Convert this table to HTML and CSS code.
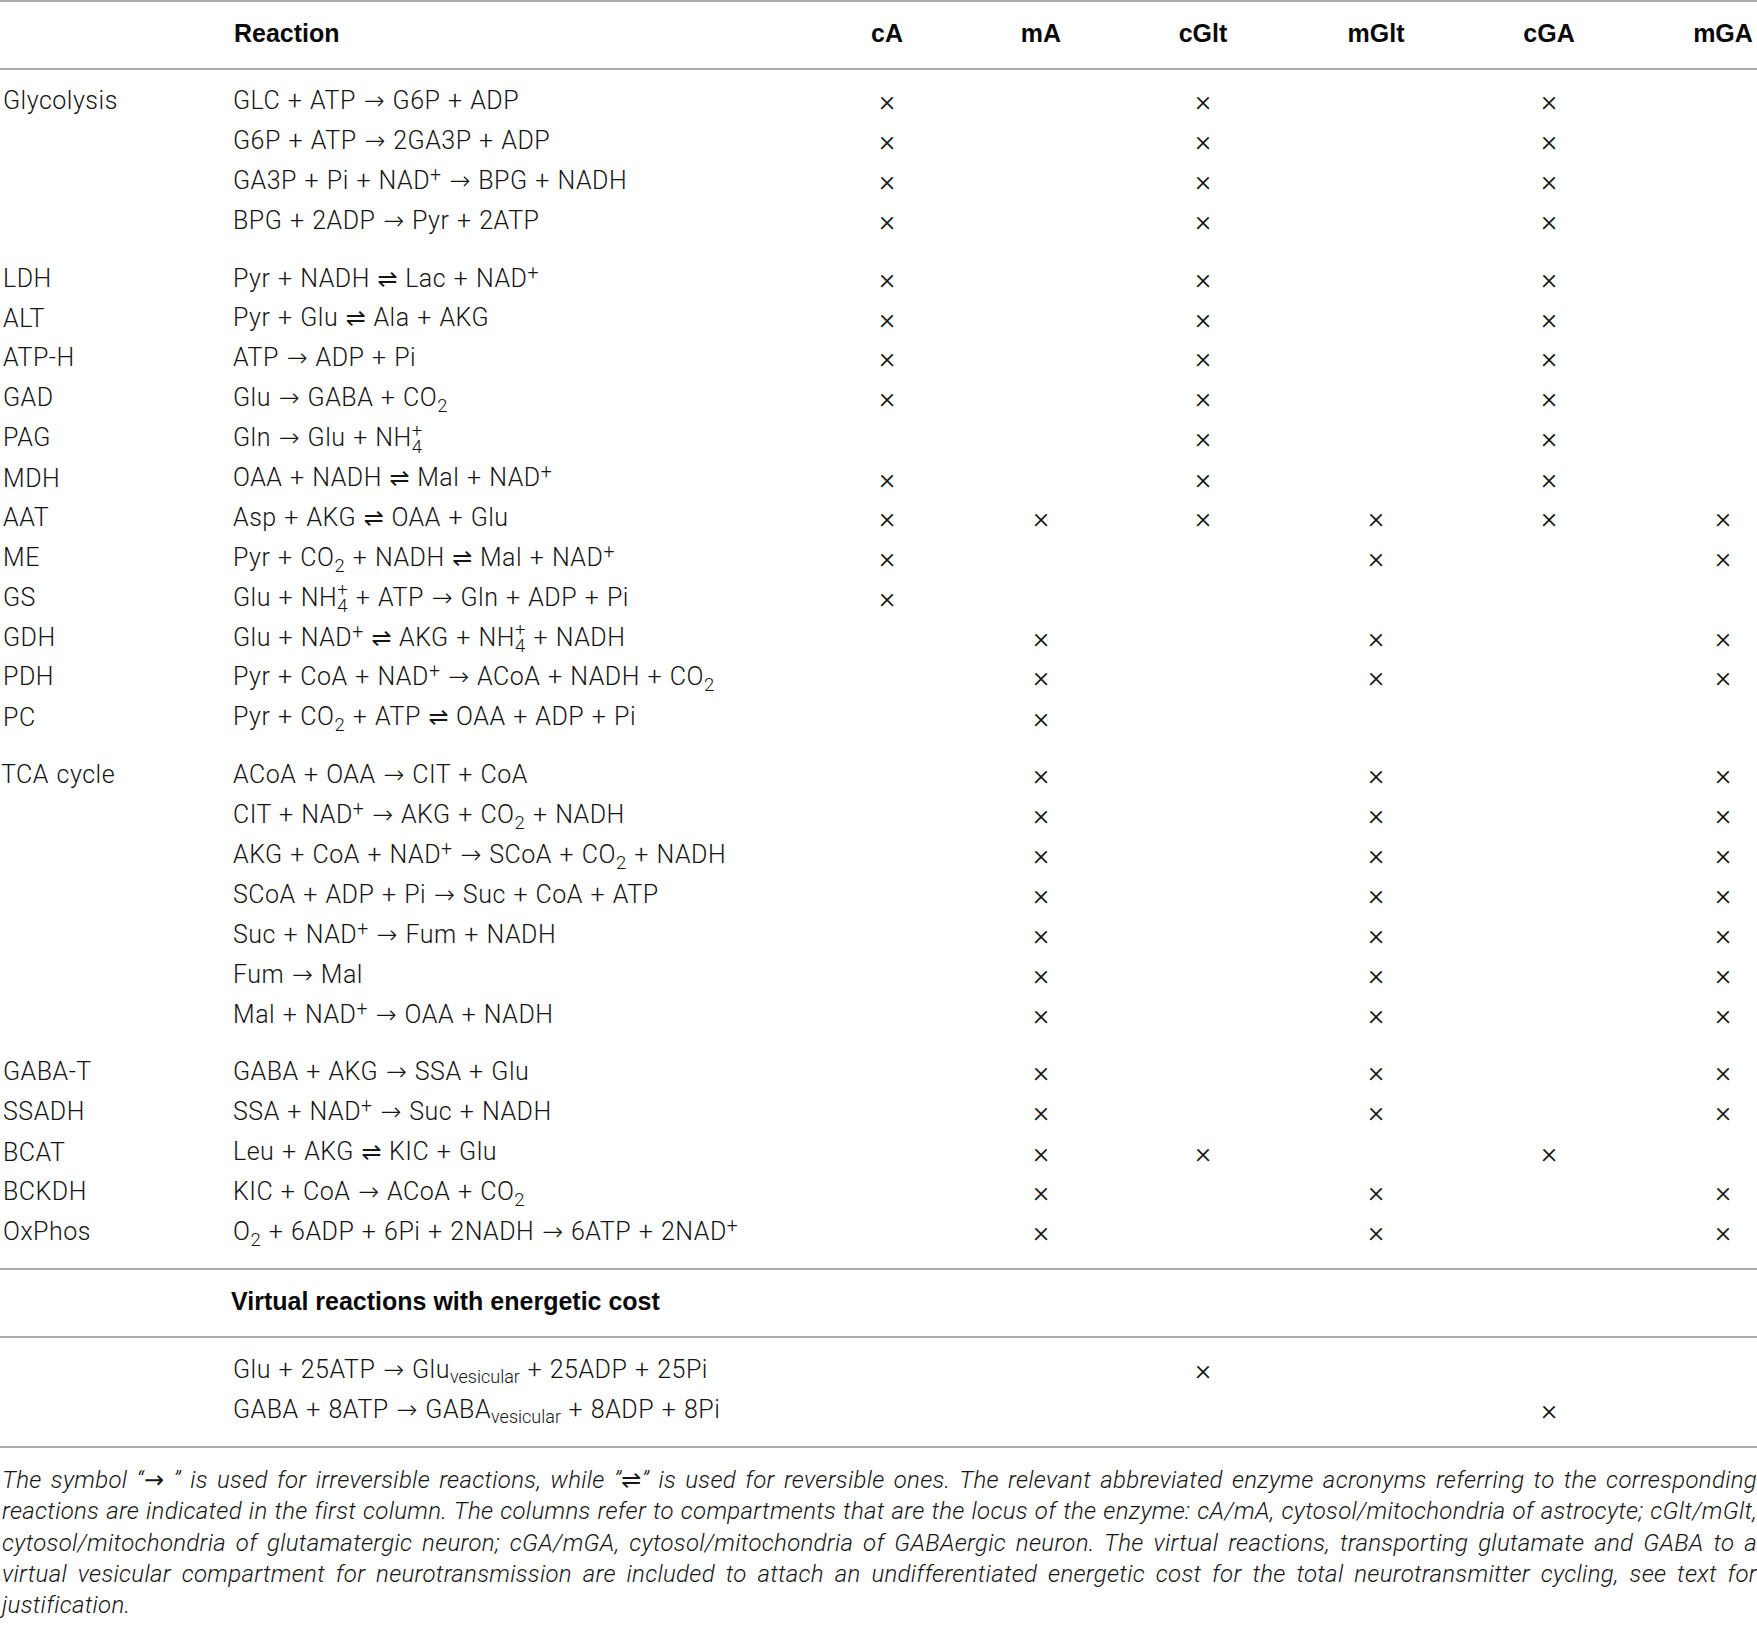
FILE: index.html
```html
<!DOCTYPE html>
<html lang="en">
<head>
<meta charset="utf-8">
<title>Reactions table</title>
<link rel="stylesheet" href="styles.css">
</head>
<body>
<div class="tbl">
  <div class="row head">
    <span></span><span class="rx">Reaction</span>
    <span class="c">cA</span><span class="c">mA</span><span class="c">cGlt</span><span class="c">mGlt</span><span class="c">cGA</span><span class="c last">mGA</span>
  </div>
  <div class="body">
    <div class="row"><span class="enz">Glycolysis</span><span class="rx">GLC + ATP → G6P + ADP</span><span class="c">×</span><span class="c"></span><span class="c">×</span><span class="c"></span><span class="c">×</span><span class="c last"></span></div>
    <div class="row"><span class="enz"></span><span class="rx">G6P + ATP → 2GA3P + ADP</span><span class="c">×</span><span class="c"></span><span class="c">×</span><span class="c"></span><span class="c">×</span><span class="c last"></span></div>
    <div class="row"><span class="enz"></span><span class="rx">GA3P + Pi + NAD<sup>+</sup> → BPG + NADH</span><span class="c">×</span><span class="c"></span><span class="c">×</span><span class="c"></span><span class="c">×</span><span class="c last"></span></div>
    <div class="row"><span class="enz"></span><span class="rx">BPG + 2ADP → Pyr + 2ATP</span><span class="c">×</span><span class="c"></span><span class="c">×</span><span class="c"></span><span class="c">×</span><span class="c last"></span></div>

    <div class="row gs"><span class="enz">LDH</span><span class="rx">Pyr + NADH <span class="eq">⇌</span> Lac + NAD<sup>+</sup></span><span class="c">×</span><span class="c"></span><span class="c">×</span><span class="c"></span><span class="c">×</span><span class="c last"></span></div>
    <div class="row"><span class="enz">ALT</span><span class="rx">Pyr + Glu <span class="eq">⇌</span> Ala + AKG</span><span class="c">×</span><span class="c"></span><span class="c">×</span><span class="c"></span><span class="c">×</span><span class="c last"></span></div>
    <div class="row"><span class="enz">ATP-H</span><span class="rx">ATP → ADP + Pi</span><span class="c">×</span><span class="c"></span><span class="c">×</span><span class="c"></span><span class="c">×</span><span class="c last"></span></div>
    <div class="row"><span class="enz">GAD</span><span class="rx">Glu → GABA + CO<sub>2</sub></span><span class="c">×</span><span class="c"></span><span class="c">×</span><span class="c"></span><span class="c">×</span><span class="c last"></span></div>
    <div class="row"><span class="enz">PAG</span><span class="rx">Gln → Glu + NH<span class="ion"><span>+</span><span>4</span></span></span><span class="c"></span><span class="c"></span><span class="c">×</span><span class="c"></span><span class="c">×</span><span class="c last"></span></div>
    <div class="row"><span class="enz">MDH</span><span class="rx">OAA + NADH <span class="eq">⇌</span> Mal + NAD<sup>+</sup></span><span class="c">×</span><span class="c"></span><span class="c">×</span><span class="c"></span><span class="c">×</span><span class="c last"></span></div>
    <div class="row"><span class="enz">AAT</span><span class="rx">Asp + AKG <span class="eq">⇌</span> OAA + Glu</span><span class="c">×</span><span class="c">×</span><span class="c">×</span><span class="c">×</span><span class="c">×</span><span class="c last">×</span></div>
    <div class="row"><span class="enz">ME</span><span class="rx">Pyr + CO<sub>2</sub> + NADH <span class="eq">⇌</span> Mal + NAD<sup>+</sup></span><span class="c">×</span><span class="c"></span><span class="c"></span><span class="c">×</span><span class="c"></span><span class="c last">×</span></div>
    <div class="row"><span class="enz">GS</span><span class="rx">Glu + NH<span class="ion"><span>+</span><span>4</span></span> + ATP → Gln + ADP + Pi</span><span class="c">×</span><span class="c"></span><span class="c"></span><span class="c"></span><span class="c"></span><span class="c last"></span></div>
    <div class="row"><span class="enz">GDH</span><span class="rx">Glu + NAD<sup>+</sup> <span class="eq">⇌</span> AKG + NH<span class="ion"><span>+</span><span>4</span></span> + NADH</span><span class="c"></span><span class="c">×</span><span class="c"></span><span class="c">×</span><span class="c"></span><span class="c last">×</span></div>
    <div class="row"><span class="enz">PDH</span><span class="rx">Pyr + CoA + NAD<sup>+</sup> → ACoA + NADH + CO<sub>2</sub></span><span class="c"></span><span class="c">×</span><span class="c"></span><span class="c">×</span><span class="c"></span><span class="c last">×</span></div>
    <div class="row"><span class="enz">PC</span><span class="rx">Pyr + CO<sub>2</sub> + ATP <span class="eq">⇌</span> OAA + ADP + Pi</span><span class="c"></span><span class="c">×</span><span class="c"></span><span class="c"></span><span class="c"></span><span class="c last"></span></div>

    <div class="row gs"><span class="enz tca">TCA cycle</span><span class="rx">ACoA + OAA → CIT + CoA</span><span class="c"></span><span class="c">×</span><span class="c"></span><span class="c">×</span><span class="c"></span><span class="c last">×</span></div>
    <div class="row"><span class="enz"></span><span class="rx">CIT + NAD<sup>+</sup> → AKG + CO<sub>2</sub> + NADH</span><span class="c"></span><span class="c">×</span><span class="c"></span><span class="c">×</span><span class="c"></span><span class="c last">×</span></div>
    <div class="row"><span class="enz"></span><span class="rx">AKG + CoA + NAD<sup>+</sup> → SCoA + CO<sub>2</sub> + NADH</span><span class="c"></span><span class="c">×</span><span class="c"></span><span class="c">×</span><span class="c"></span><span class="c last">×</span></div>
    <div class="row"><span class="enz"></span><span class="rx">SCoA + ADP + Pi → Suc + CoA + ATP</span><span class="c"></span><span class="c">×</span><span class="c"></span><span class="c">×</span><span class="c"></span><span class="c last">×</span></div>
    <div class="row"><span class="enz"></span><span class="rx">Suc + NAD<sup>+</sup> → Fum + NADH</span><span class="c"></span><span class="c">×</span><span class="c"></span><span class="c">×</span><span class="c"></span><span class="c last">×</span></div>
    <div class="row"><span class="enz"></span><span class="rx">Fum → Mal</span><span class="c"></span><span class="c">×</span><span class="c"></span><span class="c">×</span><span class="c"></span><span class="c last">×</span></div>
    <div class="row"><span class="enz"></span><span class="rx">Mal + NAD<sup>+</sup> → OAA + NADH</span><span class="c"></span><span class="c">×</span><span class="c"></span><span class="c">×</span><span class="c"></span><span class="c last">×</span></div>

    <div class="row gs"><span class="enz">GABA-T</span><span class="rx">GABA + AKG → SSA + Glu</span><span class="c"></span><span class="c">×</span><span class="c"></span><span class="c">×</span><span class="c"></span><span class="c last">×</span></div>
    <div class="row"><span class="enz">SSADH</span><span class="rx">SSA + NAD<sup>+</sup> → Suc + NADH</span><span class="c"></span><span class="c">×</span><span class="c"></span><span class="c">×</span><span class="c"></span><span class="c last">×</span></div>
    <div class="row"><span class="enz">BCAT</span><span class="rx">Leu + AKG <span class="eq">⇌</span> KIC + Glu</span><span class="c"></span><span class="c">×</span><span class="c">×</span><span class="c"></span><span class="c">×</span><span class="c last"></span></div>
    <div class="row"><span class="enz">BCKDH</span><span class="rx">KIC + CoA → ACoA + CO<sub>2</sub></span><span class="c"></span><span class="c">×</span><span class="c"></span><span class="c">×</span><span class="c"></span><span class="c last">×</span></div>
    <div class="row"><span class="enz">OxPhos</span><span class="rx">O<sub>2</sub> + 6ADP + 6Pi + 2NADH → 6ATP + 2NAD<sup>+</sup></span><span class="c"></span><span class="c">×</span><span class="c"></span><span class="c">×</span><span class="c"></span><span class="c last">×</span></div>
  </div>

  <div class="section">
    <span></span><span class="sect-title">Virtual reactions with energetic cost</span>
  </div>

  <div class="body body-virtual">
    <div class="row"><span class="enz"></span><span class="rx">Glu + 25ATP → Glu<sub class="ves">vesicular</sub> + 25ADP + 25Pi</span><span class="c"></span><span class="c"></span><span class="c">×</span><span class="c"></span><span class="c"></span><span class="c last"></span></div>
    <div class="row"><span class="enz"></span><span class="rx">GABA + 8ATP → GABA<sub class="ves">vesicular</sub> + 8ADP + 8Pi</span><span class="c"></span><span class="c"></span><span class="c"></span><span class="c"></span><span class="c">×</span><span class="c last"></span></div>
  </div>
</div>

<p class="caption">
  <span class="ln">The symbol “→ ” is used for irreversible reactions, while ”⇌” is used for reversible ones. The relevant abbreviated enzyme acronyms referring to the corresponding</span>
  <span class="ln">reactions are indicated in the first column. The columns refer to compartments that are the locus of the enzyme: cA/mA, cytosol/mitochondria of astrocyte; cGlt/mGlt,</span>
  <span class="ln">cytosol/mitochondria of glutamatergic neuron; cGA/mGA, cytosol/mitochondria of GABAergic neuron. The virtual reactions, transporting glutamate and GABA to a</span>
  <span class="ln">virtual vesicular compartment for neurotransmission are included to attach an undifferentiated energetic cost for the total neurotransmitter cycling, see text for</span>
  <span class="ln end">justification.</span>
</p>
</body>
</html>
```

FILE: styles.css
```css
html, body {
  margin: 0;
  padding: 0;
  background: #ffffff;
}

body {
  width: 1757px;
  color: #151515;
  font-family: Roboto, "DejaVu Sans", sans-serif;
  font-weight: 300;
  font-size: 25px;
}

.tbl {
  border-top: 2px solid #ababab;
}

.row {
  display: grid;
  grid-template-columns: 233px 577px 154px 154px 170px 176px 170px 123px;
  align-items: center;
  height: 39.9px;
  line-height: 39.9px;
  white-space: nowrap;
}

.body .row {
  letter-spacing: 0.5px;
  word-spacing: 1px;
}

.row.gs {
  margin-top: 18px;
}

.head {
  height: 68px;
  line-height: 30px;
  padding-bottom: 4px;
  box-sizing: border-box;
  border-bottom: 2px solid #ababab;
  font-family: "Liberation Sans", Arial, sans-serif;
  font-weight: 700;
  font-size: 25px;
  color: #0a0a0a;
}

.head .rx {
  padding-left: 1px;
}

.enz {
  padding-left: 3px;
}

.enz.tca {
  padding-left: 1px;
}

.c {
  text-align: center;
}

.body .c {
  font-size: 30px;
  letter-spacing: 0;
}

.c.last {
  padding-left: 55px;
}

.body {
  padding: 11px 0 16px;
}

.body-virtual {
  padding: 12px 0 16px;
  border-bottom: 2px solid #ababab;
}

.section {
  display: grid;
  grid-template-columns: 231px 1fr;
  align-items: center;
  height: 70px;
  padding-bottom: 2px;
  box-sizing: border-box;
  border-top: 2px solid #ababab;
  border-bottom: 2px solid #ababab;
  font-family: "Liberation Sans", Arial, sans-serif;
  font-weight: 700;
  font-size: 25px;
  color: #0a0a0a;
}

.eq {
  font-family: "DejaVu Sans", sans-serif;
  font-weight: 400;
  font-size: 24px;
  letter-spacing: 0;
}

sup {
  font-size: 0.78em;
  line-height: 0;
  vertical-align: 0.42em;
}

sub {
  font-size: 0.74em;
  line-height: 0;
  vertical-align: -0.32em;
}

sub.ves {
  font-size: 0.72em;
  vertical-align: -0.3em;
  letter-spacing: 0;
}

.ion {
  display: inline-flex;
  flex-direction: column;
  font-size: 0.74em;
  line-height: 16px;
  vertical-align: 0.5em;
}

.caption {
  margin: 17px 0 0;
  padding-left: 2px;
  font-style: italic;
  font-size: 24px;
  line-height: 31.4px;
  letter-spacing: 0.3px;
}

.caption .ln {
  display: block;
  text-align: justify;
  text-align-last: justify;
}

.caption .ln.end {
  text-align-last: left;
}
```
